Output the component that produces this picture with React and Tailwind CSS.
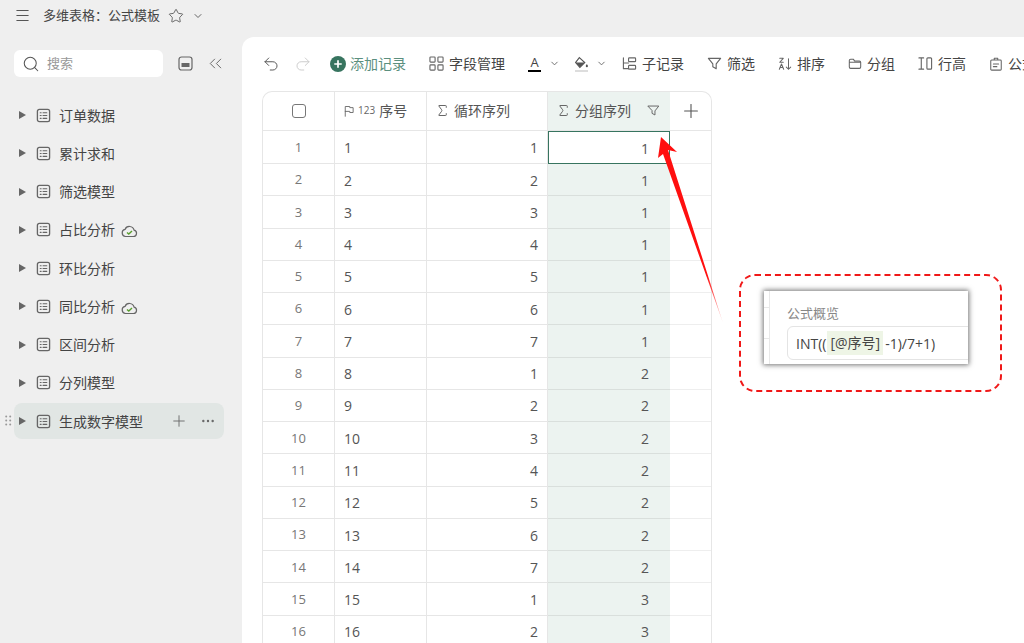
import React from 'react'
import { Menu, Star, ChevronDown, Search, ChevronsLeft, Undo2, Redo2, Plus, Ellipsis, Sigma } from 'lucide-react'

const sheets = ['订单数据', '累计求和', '筛选模型', '占比分析', '环比分析', '同比分析', '区间分析', '分列模型', '生成数字模型']
const synced = ['占比分析', '同比分析']

const rows = Array.from({ length: 16 }, (_, i) => ({
  no: i + 1,
  loop: (i % 7) + 1,
  group: Math.floor(i / 7) + 1,
}))

function Svg({ size = 16, children }) {
  return (
    <svg width={size} height={size} viewBox="0 0 16 16" fill="none" stroke="#666" strokeWidth="1.2" strokeLinecap="round" strokeLinejoin="round" className="shrink-0">
      {children}
    </svg>
  )
}

function SheetIcon() {
  return (
    <Svg size={15}>
      <rect x="1.5" y="1.5" width="13" height="13" rx="2" strokeWidth="1.4" />
      <path d="M4.5 5h1M7.5 5h4M4.5 8h1M7.5 8h4M4.5 11h1M7.5 11h4" />
    </Svg>
  )
}

function CloudCheck() {
  return (
    <svg width="17" height="14" viewBox="0 0 17 14" fill="none" className="shrink-0">
      <path d="M4.5 12.500h8a3.200 3.200 0 0 0 .6-6.300A4.800 4.800 0 0 0 4 5.400a3.600 3.600 0 0 0 .5 7.100z" stroke="#666" strokeWidth="1.2" />
      <path d="M6 8.400l1.800 1.700L11 7" stroke="#5a9e2f" strokeWidth="1.4" />
    </svg>
  )
}

function SheetRow({ name, active }) {
  return (
    <div className={`relative flex items-center h-[36px] mb-[2.25px] rounded-[8px] pl-[5px] pr-[8px] ${active ? 'bg-[#e1e6e4]' : ''}`}>
      {active && (
        <svg width="7" height="11" viewBox="0 0 7 11" fill="#999" className="absolute left-[-9px] top-[12px]">
          <circle cx="1.2" cy="1.5" r="1" /><circle cx="5.2" cy="1.5" r="1" />
          <circle cx="1.2" cy="5.5" r="1" /><circle cx="5.2" cy="5.5" r="1" />
          <circle cx="1.2" cy="9.5" r="1" /><circle cx="5.2" cy="9.5" r="1" />
        </svg>
      )}
      <span className="w-0 h-0 border-y-[4.5px] border-y-transparent border-l-[7px] border-l-[#666] shrink-0" />
      <span className="ml-[10px]"><SheetIcon /></span>
      <span className="ml-[8px] text-[14px] text-[#444]">{name}</span>
      {synced.includes(name) && <span className="ml-[6px] mt-[3px]"><CloudCheck /></span>}
      {active && (
        <div className="ml-auto flex items-center gap-[12px]">
          <Plus size={18} strokeWidth={1.2} className="text-[#666]" />
          <Ellipsis size={16} strokeWidth={1.6} className="text-[#666]" />
        </div>
      )}
    </div>
  )
}

function Tool({ icon, label, labelClass = 'text-[#444]' }) {
  return (
    <div className="flex items-center gap-[5px] shrink-0">
      {icon}
      <span className={`text-[14px] whitespace-nowrap ${labelClass}`}>{label}</span>
    </div>
  )
}

function Toolbar() {
  return (
    <div className="h-[54px] flex items-center pl-[20px] pb-[1px] overflow-hidden">
      <Undo2 size={18} strokeWidth={1.3} className="text-[#555] shrink-0" />
      <Redo2 size={18} strokeWidth={1.3} className="text-[#ccc] shrink-0 ml-[14px]" />
      <div className="ml-[18px] flex items-center gap-[23px]">
        <Tool
          label="添加记录"
          labelClass="text-[#5b8f7e]"
          icon={
            <svg width="16" height="16" viewBox="0 0 15 15" className="shrink-0 -mr-[1px]">
              <circle cx="7.5" cy="7.5" r="7.5" fill="#37745f" />
              <path d="M7.5 4v7M4 7.5h7" stroke="#fff" strokeWidth="1.6" />
            </svg>
          }
        />
        <Tool
          label="字段管理"
          icon={
            <Svg size={15}>
              <rect x="1" y="1" width="5.500" height="5.500" rx="0.8" />
              <rect x="9.500" y="1" width="5.500" height="5.500" rx="0.8" />
              <rect x="1" y="9.500" width="5.500" height="5.500" rx="0.8" />
              <rect x="9.500" y="9.500" width="5.500" height="5.500" rx="0.8" />
            </Svg>
          }
        />
        <div className="flex items-center gap-[8px] shrink-0 -mr-[9px]">
          <div className="flex flex-col items-center w-[13px]">
            <span className="text-[13px] leading-[13px] text-[#444]">A</span>
            <span className="block w-[13px] h-[2px] bg-black mt-[1px]" />
          </div>
          <ChevronDown size={11} className="text-[#666]" />
        </div>
        <div className="flex items-center gap-[8px] shrink-0 -mr-[8px]">
          <div className="flex flex-col items-center w-[14px]">
            <svg width="15" height="13" viewBox="0 0 14 12" fill="none">
              <path d="M5 1.500l5 4.500-4.500 4.500L1.500 6z" stroke="#555" strokeWidth="1.1" />
              <path d="M2 6h8l-4.500 4.500z" fill="#555" />
              <path d="M12 7.500c.7 1 1 1.500 1 2a1 1 0 0 1-2 0c0-.5.3-1 1-2z" fill="#555" />
            </svg>
            <span className="block w-[13px] h-[2px] bg-[#ddd] mt-[1px]" />
          </div>
          <ChevronDown size={11} className="text-[#666]" />
        </div>
        <Tool
          label="子记录"
          icon={
            <Svg size={15}>
              <path d="M1.500 2v11.500h5.500M1.500 7.500H7" />
              <rect x="7" y="2" width="7.500" height="4" rx="0.8" />
              <rect x="7" y="10" width="7.500" height="4" rx="0.8" />
            </Svg>
          }
        />
        <Tool
          label="筛选"
          icon={
            <Svg size={15}>
              <path d="M1.500 2.500h13L9.800 8.500v5l-3.600-2v-3z" />
            </Svg>
          }
        />
        <Tool
          label="排序"
          icon={
            <Svg size={14}>
              <path d="M2 1.500h4L2 6h4M1.500 14l2.500-6 2.500 6M2.500 12h3M12 2v12M9.500 11.500L12 14l2.500-2.500" />
            </Svg>
          }
        />
        <Tool
          label="分组"
          icon={
            <Svg size={14}>
              <path d="M1.500 4a1.500 1.500 0 0 1 1.500-1.500h3l1.500 2h5.500a1.500 1.500 0 0 1 1.500 1.500v5.500a1.500 1.500 0 0 1-1.500 1.500H3a1.500 1.500 0 0 1-1.500-1.500zM1.500 6h13" />
            </Svg>
          }
        />
        <Tool
          label="行高"
          icon={
            <Svg size={15}>
              <path d="M1 2h5M1 14h5M3.500 2v12" />
              <rect x="9.500" y="2" width="5" height="12" rx="1" />
            </Svg>
          }
        />
        <Tool
          label="公式"
          icon={
            <Svg size={14}>
              <path d="M3 3.500h10a1 1 0 0 1 1 1V14a1 1 0 0 1-1 1H3a1 1 0 0 1-1-1V4.500a1 1 0 0 1 1-1zM6 3.500V1.500h4v2M5 8h6M5 11h4" />
            </Svg>
          }
        />
      </div>
    </div>
  )
}

function DataTable() {
  return (
    <div className="ml-[20px] w-[450px] border-l border-r border-t border-[#e6e6e6] rounded-t-[10px] overflow-hidden">
      <div className="flex h-[39px] border-b border-[#e6e6e6] text-[14px] text-[#555]">
        <div className="w-[72px] shrink-0 flex items-center justify-center border-r border-[#e6e6e6]">
          <span className="block w-[14px] h-[14px] rounded-[3px] border border-[#777]" />
        </div>
        <div className="w-[92px] shrink-0 flex items-center pl-[8px] pb-[1px] border-r border-[#e6e6e6]">
          <Svg size={12}>
            <path d="M3 15V2h6v1.500h4.500v6.500H9V8.500H3" />
          </Svg>
          <span className="ml-[3px] text-[10px] text-[#666]">123</span>
          <span className="ml-[4px]">序号</span>
        </div>
        <div className="w-[121px] shrink-0 flex items-center pl-[8px] pb-[1px] border-r border-[#e6e6e6]">
          <Sigma size={15} strokeWidth={1.6} className="text-[#666]" />
          <span className="ml-[4px]">循环序列</span>
        </div>
        <div className="w-[122px] shrink-0 flex items-center pl-[8px] pb-[1px] bg-[#ecf3f0]">
          <Sigma size={15} strokeWidth={1.6} className="text-[#666]" />
          <span className="ml-[4px]">分组序列</span>
          <span className="ml-auto mr-[10px]">
            <Svg size={13}>
              <path d="M1.500 2.500h13L9.800 8.500v5l-3.600-2v-3z" />
            </Svg>
          </span>
        </div>
        <div className="flex-1 flex items-center justify-center">
          <Plus size={22} strokeWidth={1.2} className="text-[#555]" />
        </div>
      </div>
      {rows.map((r, i) => (
        <div key={r.no} className={`flex text-[14px] text-[#555] ${i === 0 ? 'h-[33px]' : 'h-[32.27px]'}`}>
          <div className="w-[72px] shrink-0 flex items-center justify-center pt-[1px] border-r border-b border-[#e6e6e6] text-[13px] text-[#777]">{r.no}</div>
          <div className="w-[92px] shrink-0 flex items-center pl-[9px] pt-[1px] border-r border-b border-[#e6e6e6]">{r.no}</div>
          <div className="w-[121px] shrink-0 flex items-center justify-end pr-[9px] pt-[1px] border-r border-b border-[#e6e6e6]">{r.loop}</div>
          {i === 0 ? (
            <div className="w-[122px] shrink-0 flex items-center justify-end pr-[20px] pt-[1px] bg-white border-[1.5px] border-[#37745f]">{r.group}</div>
          ) : (
            <div className="w-[122px] shrink-0 flex items-center justify-end pr-[21px] pt-[1px] bg-[#ecf3f0] border-b border-[#d9dfdc]">{r.group}</div>
          )}
          <div className="flex-1 border-b border-[#eeeeee]" />
        </div>
      ))}
    </div>
  )
}

function Callout() {
  return (
    <>
      <div className="absolute left-[739px] top-[274px] w-[263px] h-[118px] rounded-[16px] border-2 border-dashed border-[#f01818]" />
      <div className="absolute left-[764px] top-[291px] w-[204px] h-[73px] bg-white shadow-[0_0_5px_1px_rgba(0,0,0,0.55)] overflow-hidden">
        <div className="absolute left-0 top-0 w-[6px] h-full border-r border-[#e8e8e8]" />
        <div className="absolute left-0 top-[16px] w-[6px] border-t border-[#e8e8e8]" />
        <div className="absolute left-0 top-[47px] w-[6px] border-t border-[#e8e8e8]" />
        <div className="ml-[23px] mt-[13px] text-[13px] leading-[18px] text-[#888]">公式概览</div>
        <div className="ml-[23px] mt-[4px] h-[34px] w-[200px] rounded-[6px] border border-[#e4e4e4] flex items-center pl-[8px] text-[14px] text-[#444] whitespace-nowrap">
          <span>INT((</span>
          <span className="ml-[1px] px-[3px] h-[24px] leading-[24px] bg-[#eef5e6]">[@序号]</span>
          <span className="ml-[2px]">-1)/7+1)</span>
        </div>
      </div>
    </>
  )
}

export default function App() {
  return (
    <div className="relative w-[1024px] h-[643px] overflow-hidden bg-[#efefef] flex flex-col font-['Open_Sans','Noto_Sans_CJK_SC',sans-serif]">
      {/* top bar */}
      <div className="h-[37px] shrink-0 flex items-center pl-[14px] pb-[6px]">
        <Menu size={17} strokeWidth={1.5} className="text-[#555]" />
        <span className="ml-[12px] text-[13px] text-[#444]">多维表格：公式模板</span>
        <Star size={16} strokeWidth={1.3} className="ml-[8px] text-[#555]" />
        <ChevronDown size={12} className="ml-[8px] text-[#666]" />
      </div>

      <div className="flex flex-1 min-h-0">
        {/* sidebar */}
        <aside className="w-[242px] shrink-0 pl-[14px] pr-[18px]">
          <div className="flex items-center mt-[13px]">
            <div className="w-[149px] shrink-0 h-[27px] bg-white rounded-[6px] flex items-center pl-[8px]">
              <Search size={18} strokeWidth={1.4} className="text-[#555]" />
              <span className="ml-[7px] text-[13px] text-[#999]">搜索</span>
            </div>
            <svg width="15" height="15" viewBox="0 0 15 15" fill="none" className="ml-[15px] shrink-0">
              <rect x="1" y="1" width="13" height="13" rx="2.500" stroke="#666" strokeWidth="1.2" />
              <rect x="3.500" y="7" width="8" height="4" fill="#666" />
            </svg>
            <ChevronsLeft size={21} strokeWidth={1.1} className="ml-[12px] shrink-0 text-[#666]" />
          </div>
          <div className="mt-[20px]">
            {sheets.map((s, i) => (
              <SheetRow key={s} name={s} active={i === sheets.length - 1} />
            ))}
          </div>
        </aside>

        {/* main */}
        <main className="flex-1 min-w-0 bg-white rounded-tl-[12px] overflow-hidden">
          <Toolbar />
          <DataTable />
        </main>
      </div>

      {/* annotation arrow */}
      <svg width="1024" height="643" className="absolute left-0 top-0 pointer-events-none">
        <defs>
          <linearGradient id="fade" x1="661" y1="137" x2="723" y2="322" gradientUnits="userSpaceOnUse">
            <stop offset="0.75" stopColor="#ff0f0f" />
            <stop offset="1" stopColor="#ff0f0f" stopOpacity="0.15" />
          </linearGradient>
        </defs>
        <polygon points="661,137 677,152 668,150 723,323 663,154 658,158" fill="url(#fade)" />
      </svg>

      <Callout />
    </div>
  )
}
